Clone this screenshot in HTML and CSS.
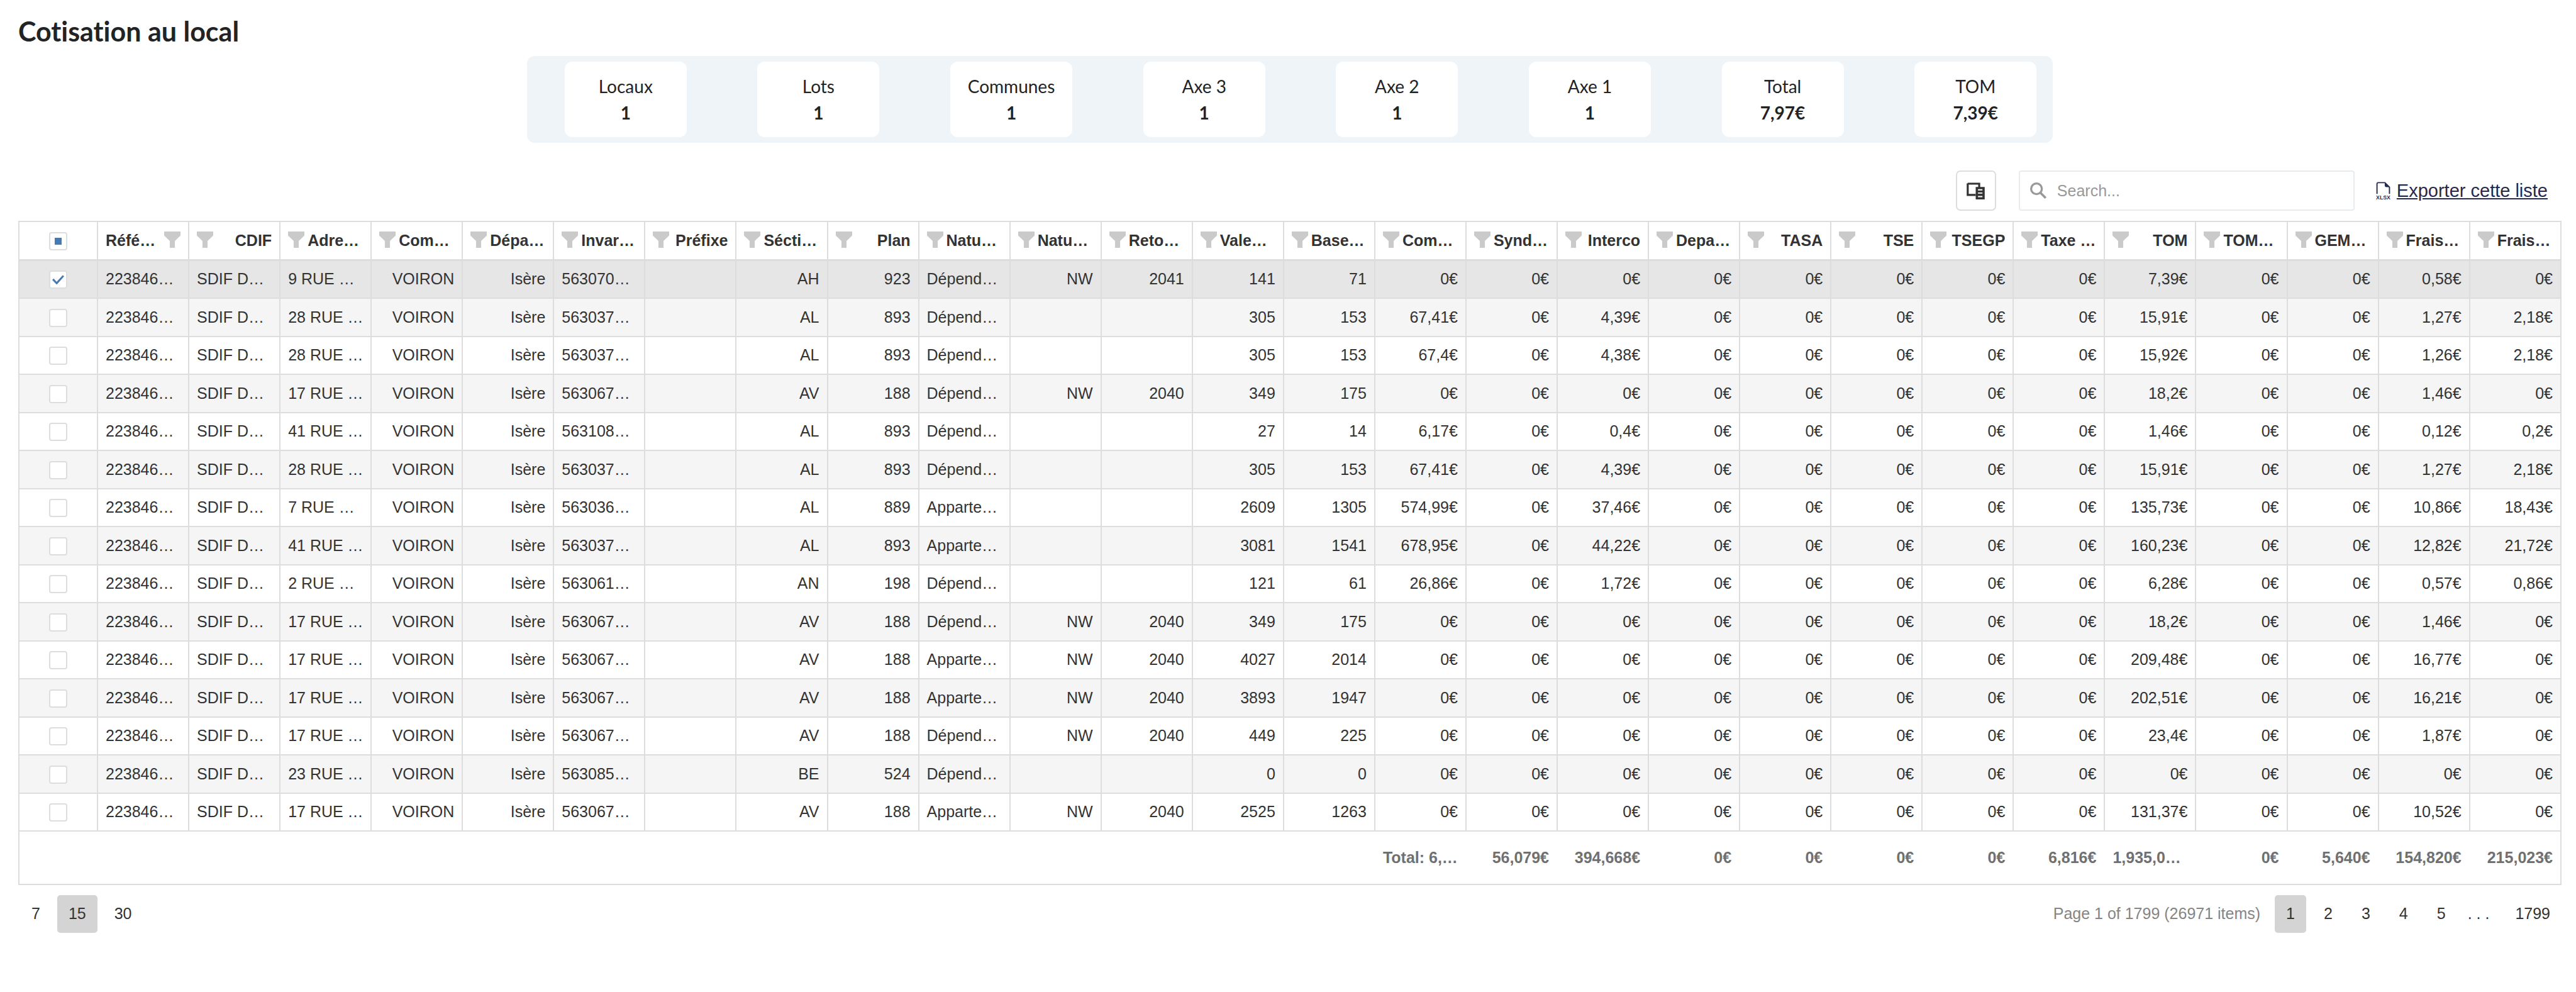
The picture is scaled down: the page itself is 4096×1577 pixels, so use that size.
FILE: index.html
```html
<!DOCTYPE html>
<html lang="fr">
<head>
<meta charset="utf-8">
<title>Cotisation au local</title>
<link rel="stylesheet" href="styles.css">
</head>
<body>
<svg class="sprite" aria-hidden="true">
  <symbol id="funnel" viewBox="0 0 32 32"><path d="M0 0H32V8L21 18.500V32H11V18.500L0 8Z"/></symbol>
</svg>
<main class="page">
  <h1 class="title">Cotisation au local</h1>

  <section class="summary" aria-label="Synthèse">
    <div class="card"><span>Locaux</span><strong>1</strong></div>
    <div class="card"><span>Lots</span><strong>1</strong></div>
    <div class="card"><span>Communes</span><strong>1</strong></div>
    <div class="card"><span>Axe 3</span><strong>1</strong></div>
    <div class="card"><span>Axe 2</span><strong>1</strong></div>
    <div class="card"><span>Axe 1</span><strong>1</strong></div>
    <div class="card"><span>Total</span><strong>7,97€</strong></div>
    <div class="card"><span>TOM</span><strong>7,39€</strong></div>
  </section>

  <div class="toolbar">
    <button class="chooser" type="button" aria-label="Colonnes">
      <svg viewBox="0 0 36 34" width="29" height="27" aria-hidden="true">
        <path d="M2 2.500H25V12M18 25H2V2" fill="none" stroke="#333" stroke-width="4"/>
        <path fill="#333" fill-rule="evenodd" d="M18 9H36V34H18ZM22.500 13.500V16H31.500V13.500ZM22.500 20V22.500H31.500V20ZM22.500 27V29.500H31.500V27Z"/>
      </svg>
    </button>
    <label class="search">
      <svg viewBox="0 0 32 32" width="26" height="26" aria-hidden="true">
        <g fill="none" stroke="#999"><circle cx="12.500" cy="12.500" r="10.500" stroke-width="4"/><path d="M20 20L30.500 30.500" stroke-width="4.500"/></g>
      </svg>
      <input type="search" placeholder="Search..." aria-label="Search">
    </label>
    <a class="export" href="#export">
      <svg viewBox="0 0 29 36" width="23" height="29" aria-hidden="true">
        <path d="M2 24V4Q2 1.500 4.500 1.500H18L27 10.500V24" fill="none" stroke="#252b50" stroke-width="2.400"/>
        <path d="M17.500 1V7Q17.500 10.500 21 10.500H28Z" fill="#252b50"/>
        <text x="14.500" y="35" text-anchor="middle" class="ext">XLSX</text>
      </svg>
      <span>Exporter cette liste</span>
    </a>
  </div>

  <table class="grid">
    <thead><tr id="head"><th class="pick"><input type="checkbox" class="box partial" aria-label="Tout sélectionner"></th></tr></thead>
    <tbody id="rows"></tbody>
    <tfoot><tr id="totals"></tr></tfoot>
  </table>

  <nav class="pager" aria-label="Pagination">
    <div class="sizes">
      <button type="button">7</button>
      <button type="button" class="on">15</button>
      <button type="button">30</button>
    </div>
    <div class="pages">
      <span class="info">Page 1 of 1799 (26971 items)</span>
      <button type="button" class="on">1</button>
      <button type="button">2</button>
      <button type="button">3</button>
      <button type="button">4</button>
      <button type="button">5</button>
      <span class="dots">. . .</span>
      <button type="button">1799</button>
    </div>
  </nav>
</main>
<script src="grid.js"></script>
</body>
</html>
```
FILE: styles.css
```css
* { box-sizing: border-box; }

body {
  margin: 0;
  background: #fff;
  color: #333;
  font: 25px/32px "Liberation Sans", Arial, sans-serif;
}

button, input { font: inherit; color: inherit; }

.sprite { display: none; }

.page { padding: 24px 23px 0 29px; }

.title {
  margin: 0 0 13px;
  color: #212324;
  font: 700 43px/52px Lato, sans-serif;
  font-variant-ligatures: none;
}

/* Summary cards */
.summary {
  display: flex;
  justify-content: space-between;
  width: 60%;
  margin: 0 auto;
  padding: 9px 26px 9px 60px;
  border-radius: 12px;
  background: #eef4f8;
}

.card {
  display: flex;
  flex-direction: column;
  align-items: center;
  width: 194px;
  padding: 18px 0;
  border-radius: 12px;
  background: #fff;
  color: #212324;
  font: 28px/42px Lato, sans-serif;
}

.card strong { font-weight: 700; }

/* Toolbar */
.toolbar {
  display: flex;
  justify-content: flex-end;
  align-items: center;
  margin: 44px 0 16px;
  padding-right: 22px;
}

.chooser {
  display: grid;
  place-items: center;
  width: 64px;
  height: 64px;
  margin-right: 36px;
  padding: 0;
  border: 2px solid #ddd;
  border-radius: 7px;
  background: #fff;
}

.search {
  display: flex;
  align-items: center;
  gap: 17px;
  width: 534px;
  height: 64px;
  margin-right: 34px;
  padding: 0 16px;
  border: 2px solid #e9ecef;
  border-radius: 4px;
}

.search input {
  flex: 1;
  min-width: 0;
  padding: 0;
  border: 0;
  outline: 0;
  background: none;
}

.search input::placeholder { color: #999; opacity: 1; }

.export {
  display: flex;
  align-items: center;
  gap: 10px;
  color: #252b50;
  font-size: 29px;
}

.ext { font: 700 11px "Liberation Sans", Arial, sans-serif; fill: #252b50; }

/* Grid */
.grid {
  width: 100%;
  table-layout: fixed;
  border: 2px solid #ddd;
  border-spacing: 0;
}

.grid th, .grid td {
  padding: 0 12px 2px;
  border-bottom: 2px solid #ddd;
  border-left: 2px solid #ddd;
  text-align: right;
  white-space: nowrap;
}

.grid .pick {
  width: 123px;
  padding: 0 0 2px;
  border-left: 0;
  text-align: center;
}

.grid th { height: 62px; border-bottom-width: 3px; }
.grid tbody tr { height: 60px; }
.grid tbody tr:nth-child(even) { height: 61px; background: #f5f5f5; }
.grid tbody tr.selected { background: #e6e6e6; }

.grid td.cut { text-align: left; }

.grid tfoot td {
  height: 83px;
  border-bottom: 0;
  border-left-color: transparent;
  color: #707070;
  font-weight: 700;
}

.head {
  display: flex;
  align-items: center;
  justify-content: space-between;
  gap: 5px;
}

.head.cut { justify-content: flex-start; }
.head.lead { flex-direction: row-reverse; justify-content: space-between; }

.funnel { flex: none; width: 26px; height: 26px; margin-bottom: 2px; fill: #cacaca; }

.box {
  appearance: none;
  display: inline-grid;
  place-items: center;
  width: 29px;
  height: 29px;
  margin: 0;
  border: 2px solid #ddd;
  border-radius: 4px;
  background: #fff;
  vertical-align: middle;
}

.box.partial::before {
  content: "";
  width: 11px;
  height: 11px;
  background: #4779b5;
}

.box:checked::before {
  content: "";
  width: 19px;
  height: 15px;
  background: #4779b5;
  clip-path: polygon(0 50%, 12% 36%, 37% 70%, 88% 0, 100% 12%, 38% 100%);
}

/* Pager */
.pager {
  display: flex;
  justify-content: space-between;
  padding: 16px 0 0 3px;
}

.sizes, .pages { display: flex; align-items: center; }
.sizes { gap: 9px; }
.pages { gap: 10px; }

.pager button {
  height: 60px;
  padding: 0 18px 2px;
  border: 0;
  border-radius: 5px;
  background: none;
}

.pager .on { background: #d4d4d4; }
.info { margin-right: 13px; padding-bottom: 2px; color: #858585; }
.dots { padding: 0 13px 2px 7px; }
```
FILE: grid.js
```js
const columns = [
  "Réfé…", "CDIF", "Adre…", "Com…", "Dépa…", "Invar…", "Préfixe", "Sécti…", "Plan",
  "Natu…", "Natu…", "Reto…", "Vale…", "Base…", "Com…", "Synd…", "Interco", "Depa…",
  "TASA", "TSE", "TSEGP", "Taxe …", "TOM", "TOM…", "GEM…", "Frais…", "Frais…"
];

// adresse | invariant | section | plan | nature | code | retour | vale | base | commune | interco | TOM | frais | frais TOM
const records = [
  "9 RUE …|563070…|AH|923|Dépend…|NW|2041|141|71|0|0|7,39|0,58|0",
  "28 RUE …|563037…|AL|893|Dépend…|||305|153|67,41|4,39|15,91|1,27|2,18",
  "28 RUE …|563037…|AL|893|Dépend…|||305|153|67,4|4,38|15,92|1,26|2,18",
  "17 RUE …|563067…|AV|188|Dépend…|NW|2040|349|175|0|0|18,2|1,46|0",
  "41 RUE …|563108…|AL|893|Dépend…|||27|14|6,17|0,4|1,46|0,12|0,2",
  "28 RUE …|563037…|AL|893|Dépend…|||305|153|67,41|4,39|15,91|1,27|2,18",
  "7 RUE …|563036…|AL|889|Apparte…|||2609|1305|574,99|37,46|135,73|10,86|18,43",
  "41 RUE …|563037…|AL|893|Apparte…|||3081|1541|678,95|44,22|160,23|12,82|21,72",
  "2 RUE …|563061…|AN|198|Dépend…|||121|61|26,86|1,72|6,28|0,57|0,86",
  "17 RUE …|563067…|AV|188|Dépend…|NW|2040|349|175|0|0|18,2|1,46|0",
  "17 RUE …|563067…|AV|188|Apparte…|NW|2040|4027|2014|0|0|209,48|16,77|0",
  "17 RUE …|563067…|AV|188|Apparte…|NW|2040|3893|1947|0|0|202,51|16,21|0",
  "17 RUE …|563067…|AV|188|Dépend…|NW|2040|449|225|0|0|23,4|1,87|0",
  "23 RUE …|563085…|BE|524|Dépend…|||0|0|0|0|0|0|0",
  "17 RUE …|563067…|AV|188|Apparte…|NW|2040|2525|1263|0|0|131,37|10,52|0"
];

const totals = [
  "Total: 6,…", "56,079€", "394,668€", "0€", "0€", "0€", "0€",
  "6,816€", "1,935,0…", "0€", "5,640€", "154,820€", "215,023€"
];

const cell = text => `<td${text.endsWith("…") ? ' class="cut"' : ""}>${text}</td>`;

document.getElementById("head").insertAdjacentHTML("beforeend", columns.map((name, i) => {
  const kind = i === 0 ? " lead" : name.endsWith("…") ? " cut" : "";
  return `<th scope="col"><div class="head${kind}"><svg class="funnel"><use href="#funnel"/></svg><span>${name}</span></div></th>`;
}).join(""));

document.getElementById("rows").innerHTML = records.map((record, i) => {
  const [address, invariant, section, plan, nature, code, back, vale, base, town, inter, tom, fee, tomFee] = record.split("|");
  const cells = [
    "223846…", "SDIF D…", address, "VOIRON", "Isère", invariant, "", section, plan,
    nature, code, back, vale, base, town + "€", "0€", inter + "€", "0€",
    "0€", "0€", "0€", "0€", tom + "€", "0€", "0€", fee + "€", tomFee + "€"
  ];
  const first = i === 0;
  return `<tr${first ? ' class="selected"' : ""}><td class="pick"><input type="checkbox" class="box" aria-label="Sélectionner la ligne ${i + 1}"${first ? " checked" : ""}></td>${cells.map(cell).join("")}</tr>`;
}).join("");

document.getElementById("totals").innerHTML = `<td class="pick" colspan="15"></td>${totals.map(cell).join("")}`;
```
